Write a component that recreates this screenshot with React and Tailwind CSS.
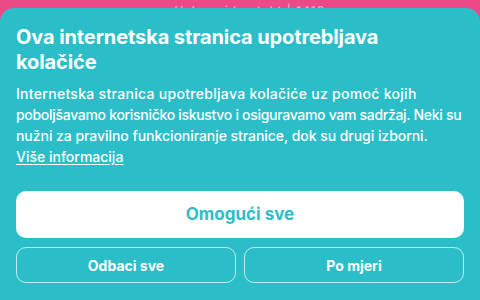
export default function App() {
  return (
    <div className="w-[480px] h-[300px] bg-[#ec4a86] overflow-hidden flex flex-col" style={{ fontFamily: 'Inter, "Noto Sans", sans-serif' }}>
      {/* page behind the banner, mostly covered */}
      <div className="h-[8px] overflow-hidden flex justify-center pl-[20px]">
        <span className="mt-[5px] text-[12px] leading-[12px] text-white/50 font-medium tracking-[1px]">Usluge i kontakt | 1410</span>
      </div>

      <div className="flex-1 bg-[#2cbec8] rounded-t-[14px] px-4 pt-[17px] text-white">
        <h2 className="text-[20px] leading-[25px] font-bold tracking-[-0.1px]">
          Ova internetska stranica upotrebljava<br />kolačiće
        </h2>
        <p className="mt-[8px] text-[14px] leading-[21px] font-medium whitespace-nowrap">
          <span className="tracking-[0.3px]">Internetska stranica upotrebljava kolačiće uz pomoć kojih</span><br />
          <span className="tracking-[-0.3px]">poboljšavamo korisničko iskustvo i osiguravamo vam sadržaj. Neki su</span><br />
          <span className="tracking-[-0.05px]">nužni za pravilno funkcioniranje stranice, dok su drugi izborni.</span><br />
          <a className="underline underline-offset-2">Više informacija</a>
        </p>

        <div className="mt-[24px] flex flex-col gap-[9px]">
          <button className="h-[47px] rounded-[10px] bg-white text-[#2cbec8] text-[17px] font-bold">
            Omogući sve
          </button>
          <div className="grid grid-cols-2 gap-[8px]">
            <button className="h-[36px] rounded-[10px] border border-white/70 text-[14px] font-bold">
              Odbaci sve
            </button>
            <button className="h-[36px] rounded-[10px] border border-white/70 text-[14px] font-bold">
              Po mjeri
            </button>
          </div>
        </div>
      </div>
    </div>
  )
}
